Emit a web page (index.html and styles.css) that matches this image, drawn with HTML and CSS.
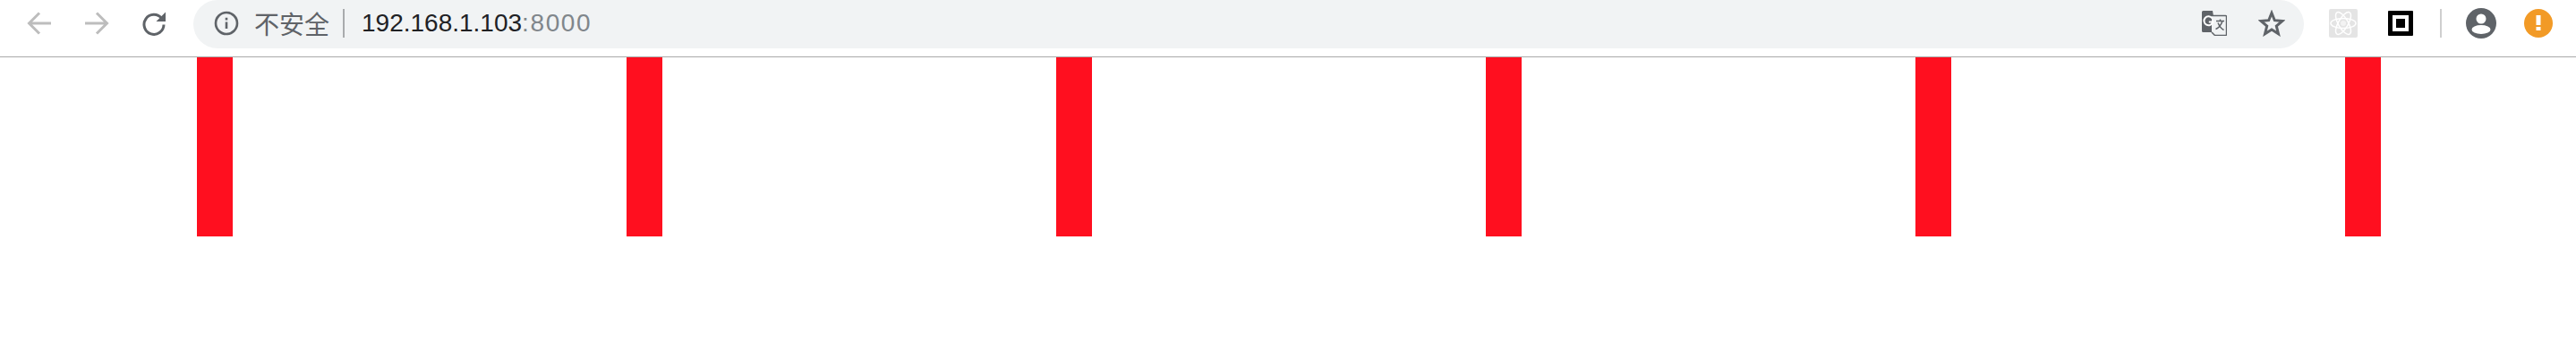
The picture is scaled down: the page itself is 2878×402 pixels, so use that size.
FILE: index.html
```html
<!DOCTYPE html>
<html lang="zh-CN">
<head>
<meta charset="utf-8">
<title>192.168.1.103:8000</title>
<link rel="stylesheet" href="styles.css">
</head>
<body>
<header class="toolbar">
  <nav class="nav">
    <svg class="icon" viewBox="0 0 28 28" fill="none" stroke="#bdbdbd" stroke-width="3"><path d="M27 14H3M14 2.5 2.5 14 14 25.500"/></svg>
    <svg class="icon" viewBox="0 0 28 28" fill="none" stroke="#bdbdbd" stroke-width="3"><path d="M1 14H25M14 2.500 25.500 14 14 25.500"/></svg>
    <svg class="icon" viewBox="0 0 28 28"><path d="M22.600 8.500A11 11 0 1 0 25 15.500" fill="none" stroke="#5f6368" stroke-width="3"/><path d="M27 1.500V12H16.500Z" fill="#5f6368"/></svg>
  </nav>
  <div class="omnibox">
    <svg class="icon info" viewBox="0 0 28 28"><circle cx="14" cy="14" r="12" fill="none" stroke="#5f6368" stroke-width="2.600"/><path d="M12.700 12.500h2.600V20h-2.600zM12.700 7.800h2.600v2.600h-2.600z" fill="#5f6368"/></svg>
    <span class="security">不安全</span>
    <span class="divider"></span>
    <span class="url">192.168.1.103<span class="port">:8000</span></span>
    <svg class="icon translate" viewBox="0 0 28 28"><path d="M1.500 0H12l4 24H1.500A1.500 1.500 0 0 1 0 22.500V1.500A1.500 1.500 0 0 1 1.500 0Z" fill="#5f6368"/><path d="M11 5.500H26.500A1 1 0 0 1 27.500 6.500V26.500A1 1 0 0 1 26.500 27.500H14.500L11 24" fill="#f1f3f4" stroke="#5f6368" stroke-width="1.500"/><path d="M16 11.500H25M20.500 9.500V11.500M23 11.500C21.500 16 19 19 15.500 20.500M18 13.500C19.500 17 21.500 20 24.500 21.500" fill="none" stroke="#5f6368" stroke-width="1.500"/><path d="M11.500 8.300A5 5 0 1 0 12.300 12.500H7.800" fill="none" stroke="#fff" stroke-width="2"/></svg>
    <svg class="icon star" viewBox="0 0 30 30"><path d="M15 3.500 18.300 11.700 27 12.400 20.300 18 22.500 26.800 15 22 7.500 26.800 9.700 18 3 12.400 11.700 11.700Z" fill="none" stroke="#5f6368" stroke-width="3"/></svg>
  </div>
  <svg class="icon react" viewBox="0 0 32 32"><rect width="32" height="32" rx="2" fill="#e4e4e4"/><g fill="none" stroke="#fff" stroke-width="1.500"><ellipse cx="16" cy="16" rx="14" ry="5.500"/><ellipse cx="16" cy="16" rx="14" ry="5.500" transform="rotate(60 16 16)"/><ellipse cx="16" cy="16" rx="14" ry="5.500" transform="rotate(120 16 16)"/></g><circle cx="16" cy="16" r="3" fill="#f3f3f3"/></svg>
  <svg class="icon square" viewBox="0 0 28 28"><rect width="28" height="28" rx="1" fill="#000"/><rect x="5" y="5" width="18" height="18" fill="#fff"/><rect x="9" y="9" width="10" height="10" fill="#000"/></svg>
  <span class="tool-divider"></span>
  <svg class="icon avatar" viewBox="0 0 34 34"><circle cx="17" cy="17" r="17" fill="#5f6368"/><circle cx="17" cy="12" r="5.500" fill="#fff"/><ellipse cx="17" cy="24" rx="10.500" ry="5" fill="#fff"/></svg>
  <svg class="icon alert" viewBox="0 0 32 32"><circle cx="16" cy="16" r="16" fill="#f29a26"/><path d="M13.500 7h5v11h-5zM13.500 20h5v4h-5z" fill="#fff"/></svg>
</header>
<main class="bars">
  <div class="bar"></div>
  <div class="bar"></div>
  <div class="bar"></div>
  <div class="bar"></div>
  <div class="bar"></div>
  <div class="bar"></div>
</main>
</body>
</html>
```

FILE: styles.css
```css
* {
  box-sizing: border-box;
}

html,
body {
  margin: 0;
  height: 100%;
  overflow: hidden;
  background: #fff;
}

body {
  font-family: "Liberation Sans", "Noto Sans CJK SC", sans-serif;
}

.toolbar {
  display: flex;
  align-items: flex-start;
  height: 64px;
  padding-left: 30px;
  border-bottom: 1px solid #aaa;
}

.icon {
  display: block;
  flex: none;
  width: 28px;
  height: 28px;
  margin-top: 12px;
}

.nav {
  display: flex;
  gap: 36px;
}

.omnibox {
  display: flex;
  align-items: flex-start;
  flex: 1;
  height: 54px;
  margin-left: 30px;
  padding: 0 21px 0 23px;
  border-radius: 27px;
  background: #f1f3f4;
}

.security {
  margin-left: 17px;
  font: 28px/52px "Noto Sans CJK SC", sans-serif;
  color: #5f6368;
}

.divider {
  width: 2px;
  height: 32px;
  margin: 10px 19px 0 15px;
  background: #a9abad;
}

.url {
  flex: 1;
  font-size: 28px;
  line-height: 52px;
  letter-spacing: 0;
  color: #202124;
}

.port {
  letter-spacing: 1.6px;
  color: #80868b;
}

.star {
  width: 30px;
  height: 30px;
  margin-top: 11px;
  margin-left: 35px;
}

.react {
  width: 32px;
  height: 32px;
  margin-top: 10px;
  margin-left: 28px;
}

.square {
  margin-left: 34px;
}

.tool-divider {
  flex: none;
  width: 2px;
  height: 32px;
  margin: 10px 27px 0 30px;
  background: #cfcfcf;
}

.avatar {
  width: 34px;
  height: 34px;
  margin-top: 9px;
}

.alert {
  width: 32px;
  height: 32px;
  margin: 10px 26px 0 31px;
}

.bars {
  display: flex;
  gap: 440px;
  padding-left: 220px;
}

.bar {
  width: 40px;
  height: 200px;
  background: #ff0f1f;
}
```
